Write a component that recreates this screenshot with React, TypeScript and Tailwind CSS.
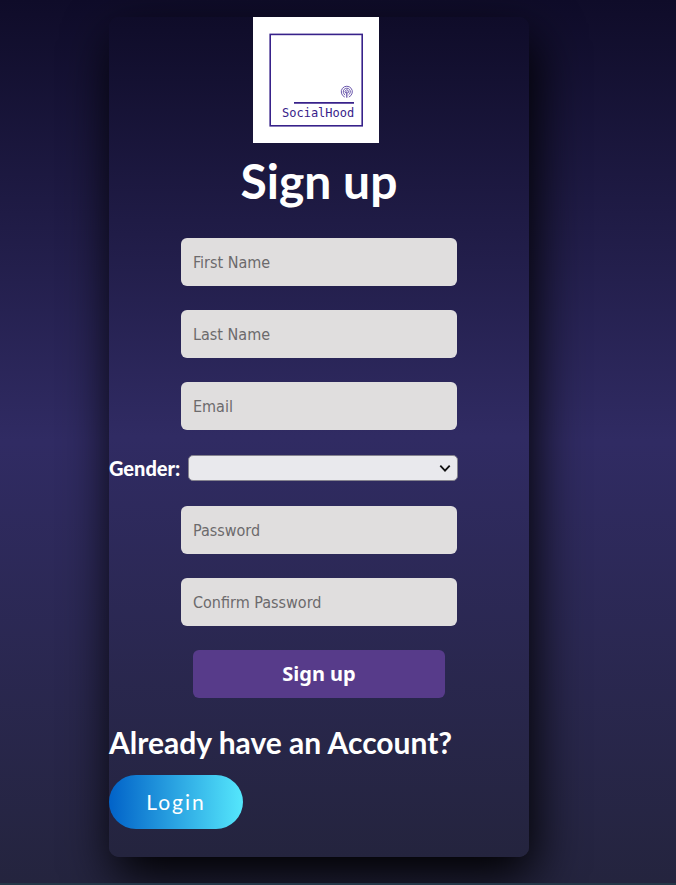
import React from "react";

function Logo() {
  return (
    <svg
      viewBox="0 0 126 126"
      className="mr-[6px] block h-[126px] w-[126px] bg-white"
      role="img"
      aria-label="SocialHood"
    >
      <rect x="17.2" y="17.4" width="92" height="91.4" fill="none" stroke="#38228a" strokeWidth="1.6" />
      <path d="M41 85.8H101" stroke="#38228a" strokeWidth="1.7" />
      <g fill="none" stroke="#6a57ac" strokeWidth="1" strokeLinecap="round">
        <path d="M91.4 79.9A5.6 5.6 0 1 1 96.2 79.9" />
        <path d="M91.8 77.8A3.6 3.6 0 1 1 95.8 77.8" />
        <path d="M92.6 76A1.8 1.8 0 1 1 95 76" />
        <path d="M93.8 75V80.2" strokeWidth="1.3" />
      </g>
      <text x="29" y="100" fill="#38228a" className="font-['DejaVu_Sans_Mono',monospace] text-[12px]">
        SocialHood
      </text>
    </svg>
  );
}

function Field({ label, type, name }: { label: string; type: string; name: string }) {
  return (
    <input
      type={type}
      name={name}
      aria-label={label}
      placeholder={label}
      className="h-12 w-[276px] rounded-md bg-[#e0dede] px-3 font-['DejaVu_Sans_Condensed','Noto_Sans',sans-serif] text-base text-[#222222] outline-none placeholder:text-[#6c6a6c]"
    />
  );
}

export default function App() {
  return (
    <div className="min-h-screen bg-[#243748] pb-[2px] font-[Lato,sans-serif] text-white">
      <main className="flex min-h-[calc(100vh-2px)] items-start justify-center overflow-hidden bg-linear-to-b/srgb from-[#0f0c29] via-[#302b63] to-[#24243e] pt-[17px] pr-[38px] pb-[26px]">
        <section className="w-full max-w-[420px] rounded-[10px] bg-linear-to-b/srgb from-[#0f0c29] via-[#302b63] to-[#24243e] pb-7 shadow-[5px_20px_50px_#000]">
          <form className="flex flex-col items-center gap-6" onSubmit={(e) => e.preventDefault()}>
            <div className="flex flex-col items-center">
              <Logo />
              <h1 className="mt-1.5 mb-0.5 text-[48px] leading-[63px] font-bold">Sign up</h1>
            </div>
            <Field label="First Name" type="text" name="firstName" />
            <Field label="Last Name" type="text" name="lastName" />
            <Field label="Email" type="email" name="email" />
            <div className="flex h-7 w-full items-center">
              <label htmlFor="gender" className="w-[79px] text-[20px] leading-7 font-black">
                Gender:
              </label>
              <div className="grid w-[270px] items-center">
                <select
                  id="gender"
                  name="gender"
                  defaultValue=""
                  className="col-start-1 row-start-1 h-[26px] w-full appearance-none rounded-[5px] border border-[#85838f] bg-[#e9e9ed] px-2 text-sm text-black"
                >
                  <option value=""></option>
                  <option value="male">Male</option>
                  <option value="female">Female</option>
                </select>
                <svg
                  viewBox="0 0 12 8"
                  className="pointer-events-none col-start-1 row-start-1 mr-[7px] h-2 w-3 justify-self-end"
                  fill="none"
                  stroke="#111"
                  strokeWidth="1.8"
                  aria-hidden="true"
                >
                  <path d="M1.3 1.6L6 6.6L10.7 1.6" />
                </svg>
              </div>
            </div>
            <Field label="Password" type="password" name="password" />
            <Field label="Confirm Password" type="password" name="confirmPassword" />
            <button
              type="submit"
              className="h-12 w-[252px] rounded-md bg-[#573b8a] font-['Noto_Sans',sans-serif] text-[20px] font-bold"
            >
              Sign up
            </button>
          </form>
          <h2 className="mt-6 text-[30px] leading-10 font-bold whitespace-nowrap">Already have an Account?</h2>
          <button
            type="button"
            className="mt-[13px] block h-[54px] w-[134px] rounded-full bg-linear-to-r/srgb from-[#0162c8] to-[#55e7fc] text-[21px] tracking-[2px]"
          >
            Login
          </button>
        </section>
      </main>
    </div>
  );
}
